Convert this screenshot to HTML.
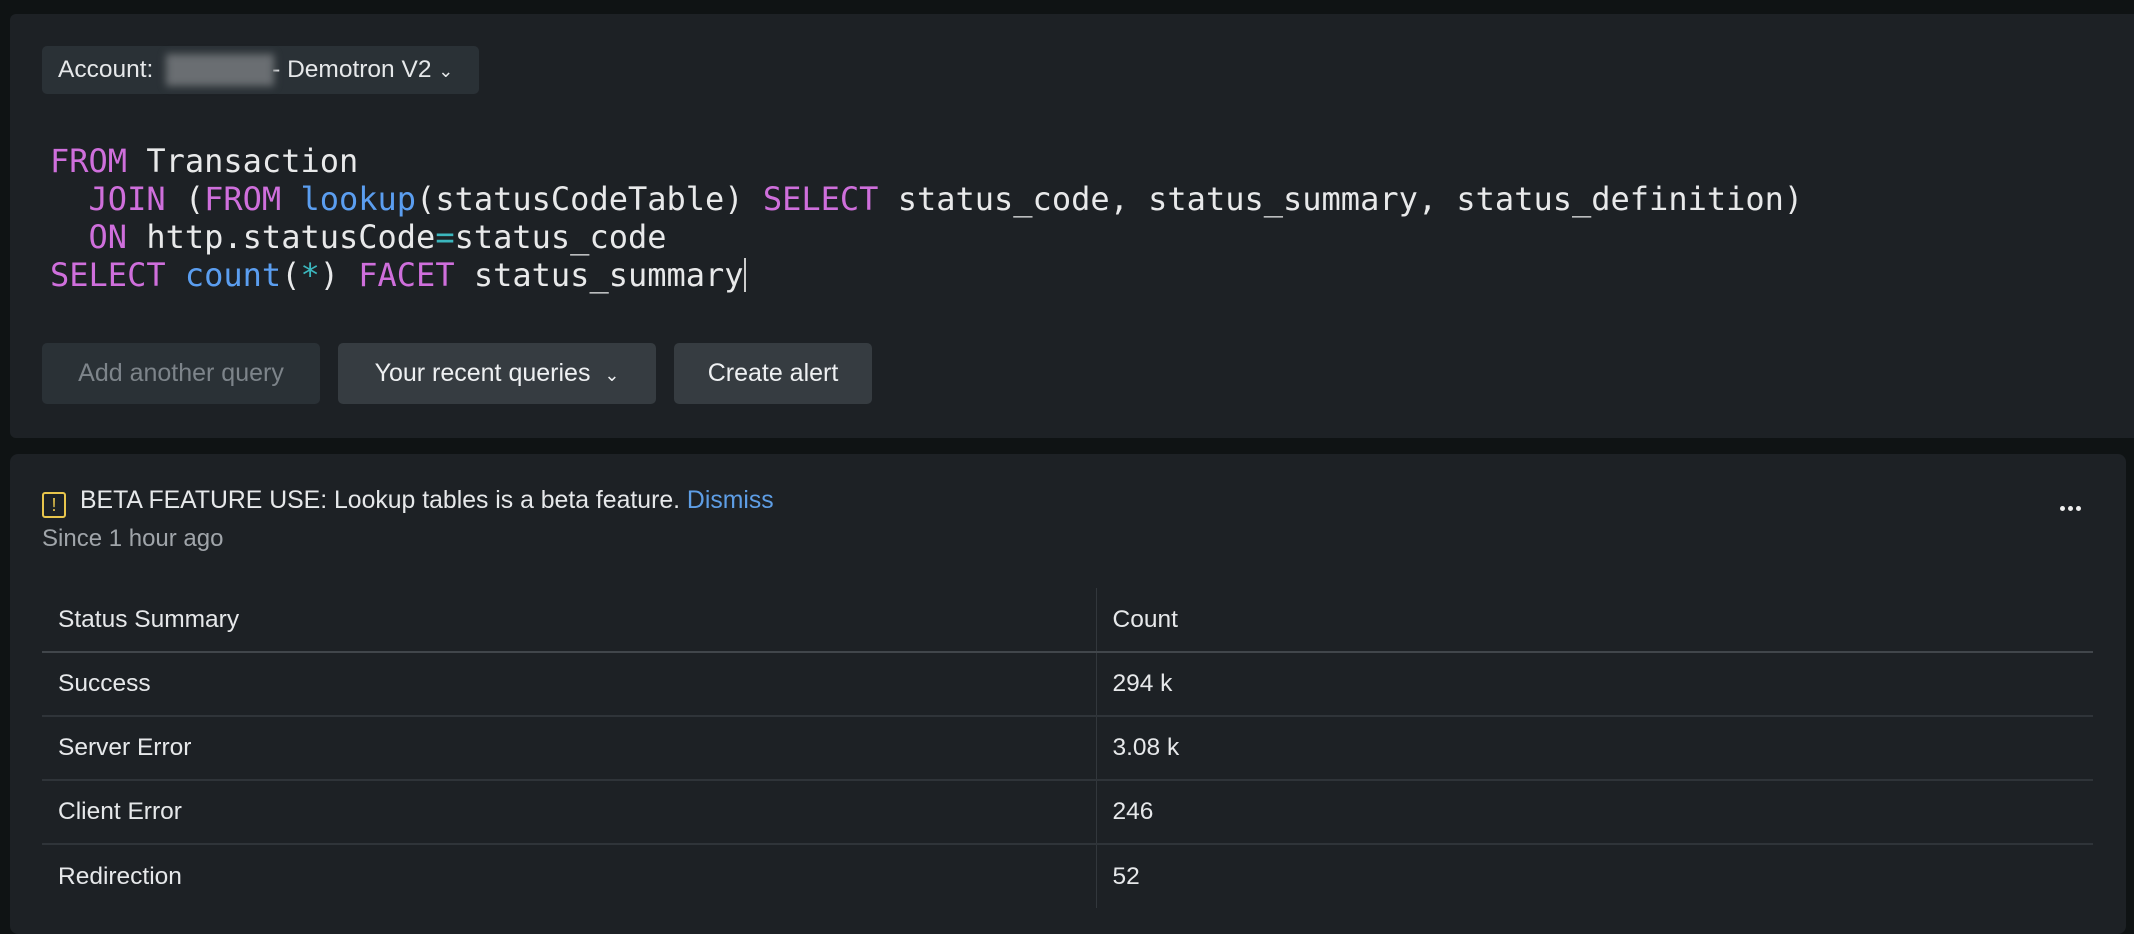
<!DOCTYPE html>
<html><head><meta charset="utf-8"><style>
*{box-sizing:border-box;margin:0;padding:0}
body{width:2134px;height:920px;background:#0f1314;font-family:"Liberation Sans",sans-serif;color:#e6e8ea;position:relative;overflow:hidden}
.p1{position:absolute;left:10px;top:14px;width:2140px;height:424px;background:#1d2125;border-radius:6px}
.p2{position:absolute;left:10px;top:454px;width:2116px;height:480px;background:#1d2125;border-radius:8px}
.acct{position:absolute;left:42px;top:46px;width:437px;height:48px;background:#2a3136;border-radius:5px;font-size:24.5px;line-height:48px;padding-left:16px;color:#e6e8ea}
.blur{position:absolute;left:124px;top:8px;width:108px;height:32px;background:#6a6e72;filter:blur(4px)}
.code{position:absolute;left:50px;top:142px;font-family:"DejaVu Sans Mono","Liberation Mono",monospace;font-size:32px;line-height:38px;white-space:pre;color:#e8e9ea}
.k{color:#cf6fdc}.f{color:#5b9ef0}.t{color:#3bb7be}
.cur{display:inline-block;width:2px;height:34px;background:#ccc;vertical-align:-6px}
.btn{position:absolute;top:343px;height:61px;border-radius:5px;background:#363c41;font-size:25px;line-height:61px;text-align:center;color:#eef0f2}
.dim{background:#2a3136;color:#7d848a}
.warn{position:absolute;left:42px;top:487px;font-size:24.8px;line-height:28px}
.ico{display:inline-block;width:24px;height:26px;border:2px solid #e8c54c;border-radius:3px;color:#e8c54c;font-size:18px;line-height:22px;text-align:center;vertical-align:-3px;margin-right:14px}
.since{position:absolute;left:42px;top:525px;font-size:24px;color:#a0a5aa}
.dot{position:absolute;top:506px;width:5px;height:5px;border-radius:50%;background:#eee}
table{position:absolute;left:42px;top:588px;width:2051px;border-collapse:collapse;font-size:24.5px}
td{height:64px;padding-left:16px;border-bottom:2px solid #2f3439;vertical-align:middle}
tr.h td{border-bottom:2px solid #41464b}
tr:last-child td{border-bottom:none}
td.c1{width:1054px;border-right:1px solid #32373c}
</style></head><body>
<div class="p1"></div>
<div class="acct">Account: <span class="blur"></span><span style="margin-left:112px">- Demotron V2 <span style="font-size:18px">&#8964;</span></span></div>
<div class="code"><span class="k">FROM</span> Transaction
  <span class="k">JOIN</span> (<span class="k">FROM</span> <span class="f">lookup</span>(statusCodeTable) <span class="k">SELECT</span> status_code, status_summary, status_definition)
  <span class="k">ON</span> http.statusCode<span class="t">=</span>status_code
<span class="k">SELECT</span> <span class="f">count</span>(<span class="t">*</span>) <span class="k">FACET</span> status_summary<span class="cur"></span></div>
<div class="btn dim" style="left:42px;width:278px">Add another query</div>
<div class="btn" style="left:338px;width:318px">Your recent queries &nbsp;<span style="font-size:18px">&#8964;</span></div>
<div class="btn" style="left:674px;width:198px">Create alert</div>
<div class="p2"></div>
<div class="warn"><span class="ico">!</span>BETA FEATURE USE: Lookup tables is a beta feature. <span style="color:#5e9ee6">Dismiss</span></div>
<div class="since">Since 1 hour ago</div>
<div class="dot" style="left:2060px"></div><div class="dot" style="left:2068px"></div><div class="dot" style="left:2076px"></div>
<table>
<tr class="h"><td class="c1">Status Summary</td><td>Count</td></tr>
<tr><td class="c1">Success</td><td>294 k</td></tr>
<tr><td class="c1">Server Error</td><td>3.08 k</td></tr>
<tr><td class="c1">Client Error</td><td>246</td></tr>
<tr><td class="c1">Redirection</td><td>52</td></tr>
</table>
</body></html>
